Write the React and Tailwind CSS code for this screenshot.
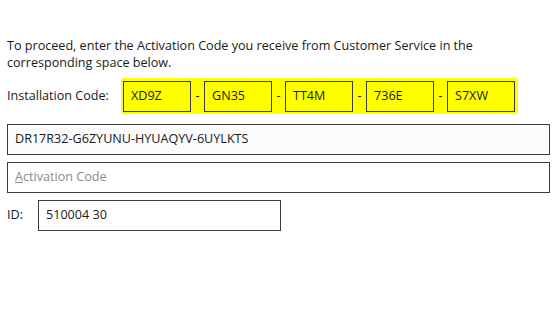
export default function App() {
  const codes = ["XD9Z", "GN35", "TT4M", "736E", "S7XW"];
  return (
    <div className="w-[560px] h-[322px] bg-white text-[#1a1a1a] pl-[7px] pr-[10px] pt-[37px] text-[12.6px]" style={{ fontFamily: '"Open Sans", "Noto Sans", sans-serif' }}>
      <div className="leading-[17px]">
        <p>To proceed, enter the Activation Code you receive from Customer Service in the</p>
        <p>corresponding space below.</p>
      </div>
      <div className="flex items-center mt-[7px] h-[36px]">
        <div className="w-[114px]">Installation Code:</div>
        <div className="flex items-center bg-[#ffff00] h-[36px] pl-[2px] pr-[3px] rounded-[3px]">
          {codes.map((c, i) => (
            <div key={c} className="flex items-center">
              {i > 0 && <div className="w-[13px] text-center">-</div>}
              <div className="w-[68px] h-[31px] border border-[#3c3c3c] flex items-center pl-[7px] pt-[1px]">{c}</div>
            </div>
          ))}
        </div>
      </div>
      <div className="mt-[10px] h-[31px] w-[543px] border border-[#3c3c3c] bg-[#fbfbfb] flex items-center pl-[7px]">
        DR17R32-G6ZYUNU-HYUAQYV-6UYLKTS
      </div>
      <div className="mt-[7px] h-[31px] w-[543px] border border-[#3c3c3c] bg-white flex items-center pl-[7px] text-[#8a8a8a]">
        <span><span className="underline">A</span>ctivation Code</span>
      </div>
      <div className="flex items-center mt-[7px]">
        <div className="w-[31px]">ID:</div>
        <div className="h-[31px] w-[243px] border border-[#3c3c3c] flex items-center pl-[7px]">510004 30</div>
      </div>
    </div>
  );
}
